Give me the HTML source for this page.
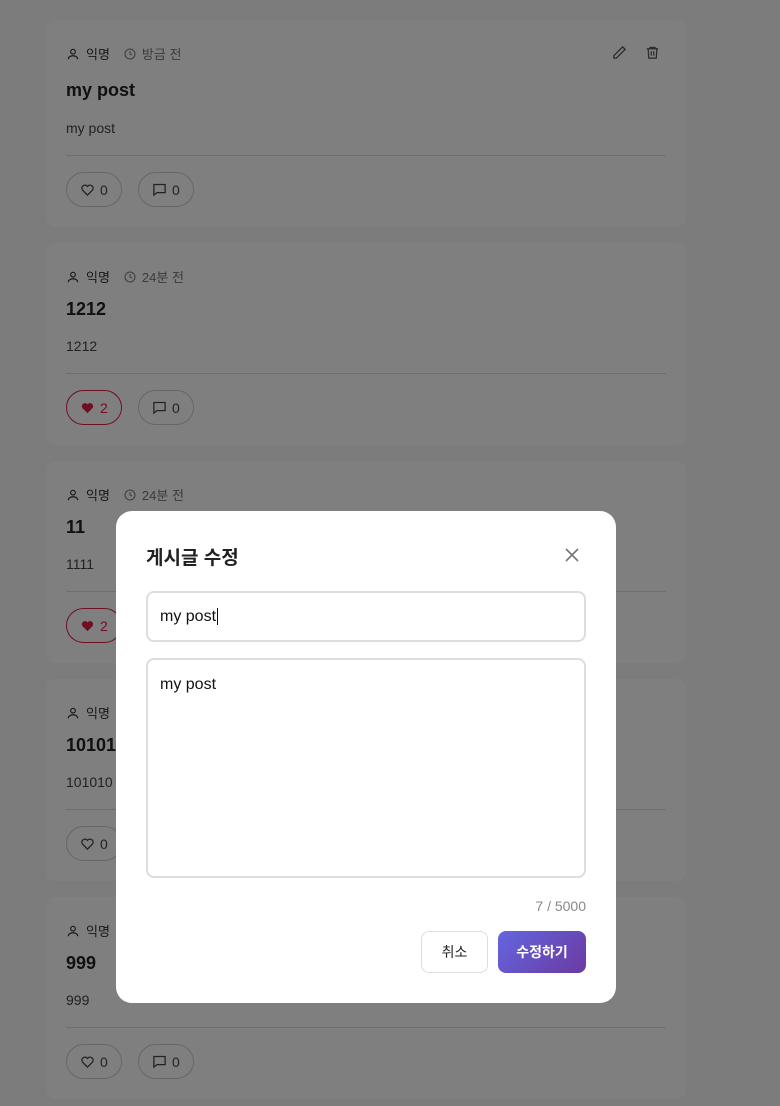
<!DOCTYPE html>
<html><head><meta charset="utf-8"><style>
*{box-sizing:border-box;margin:0;padding:0}
body{width:780px;height:1106px;overflow:hidden;background:#f8f8f8;font-family:"Liberation Sans","Noto Sans CJK KR",sans-serif;position:relative}
.card{position:absolute;left:46px;width:640px;height:202px;background:#fff;border-radius:10px;padding:0 20px}
.meta{position:absolute;top:24px;left:20px;display:flex;align-items:center;font-size:13px;color:#333}
.meta .t{color:#777;margin-left:14px;display:flex;align-items:center}
.meta svg{margin-right:6px}
.title{position:absolute;top:60px;left:20px;font-size:18px;font-weight:bold;color:#222}
.body{position:absolute;top:100px;left:20px;font-size:14px;color:#444}
.hr{position:absolute;top:135px;left:20px;right:20px;border-top:1px solid #ddd}
.btn{position:absolute;top:152px;height:35px;border:1px solid #ccc;border-radius:18px;display:flex;align-items:center;padding:0 13px;font-size:14px;color:#444}
.btn svg{margin-right:5px}
.liked{border-color:#e11d48;color:#e11d48}
.ov{position:absolute;inset:0;background:rgba(0,0,0,0.5)}
.modal{position:absolute;left:116px;top:511px;width:500px;height:492px;background:#fff;border-radius:16px}
.mt{position:absolute;left:30px;top:32px;font-size:19px;font-weight:bold;color:#222}
.in{position:absolute;left:30px;width:440px;border:2px solid #ddd;border-radius:8px;font-size:16px;color:#111;padding:0 12px}
.cnt{position:absolute;right:30px;top:387px;font-size:14px;color:#888}
.b{position:absolute;top:420px;height:42px;border-radius:8px;font-size:14px;display:flex;align-items:center;justify-content:center}
</style></head><body>

<div class="card" style="top:20px;height:207px">
 <div class="meta"><svg width="14" height="14" viewBox="0 0 24 24" fill="none" stroke="#333" stroke-width="2"><circle cx="12" cy="8" r="4"/><path d="M4 21c0-4 4-6 8-6s8 2 8 6"/></svg>익명<span class="t"><svg width="12" height="12" viewBox="0 0 24 24" fill="none" stroke="#777" stroke-width="2"><circle cx="12" cy="12" r="10"/><path d="M12 6v6l4 2"/></svg>방금 전</span></div>
 <svg style="position:absolute;left:566px;top:25px" width="15" height="15" viewBox="0 0 24 24" fill="none" stroke="#555" stroke-width="2"><path d="M17 3l4 4L7 21H3v-4z"/></svg>
 <svg style="position:absolute;left:599px;top:25px" width="15" height="15" viewBox="0 0 24 24" fill="none" stroke="#555" stroke-width="2"><path d="M3 6h18M8 6V4h8v2M5 6l1 15h12l1-15M10 10v7M14 10v7"/></svg>
 <div class="title">my post</div><div class="body">my post</div><div class="hr"></div>
 <div class="btn" style="left:20px"><svg width="15" height="15" viewBox="0 0 24 24" fill="none" stroke="#444" stroke-width="2"><path d="M12 21l-8-8a5 5 0 0 1 8-6 5 5 0 0 1 8 6z"/></svg>0</div>
 <div class="btn" style="left:92px"><svg width="15" height="15" viewBox="0 0 24 24" fill="none" stroke="#444" stroke-width="2"><path d="M3 4h18v13H8l-5 4z"/></svg>0</div>
</div>

<div class="card" style="top:243px">
 <div class="meta"><svg width="14" height="14" viewBox="0 0 24 24" fill="none" stroke="#333" stroke-width="2"><circle cx="12" cy="8" r="4"/><path d="M4 21c0-4 4-6 8-6s8 2 8 6"/></svg>익명<span class="t"><svg width="12" height="12" viewBox="0 0 24 24" fill="none" stroke="#777" stroke-width="2"><circle cx="12" cy="12" r="10"/><path d="M12 6v6l4 2"/></svg>24분 전</span></div>
 <div class="title" style="top:56px">1212</div><div class="body" style="top:95px">1212</div><div class="hr" style="top:130px"></div>
 <div class="btn liked" style="left:20px;top:147px"><svg width="15" height="15" viewBox="0 0 24 24" fill="#e11d48"><path d="M12 21l-8-8a5 5 0 0 1 8-6 5 5 0 0 1 8 6z"/></svg>2</div>
 <div class="btn" style="left:92px;top:147px"><svg width="15" height="15" viewBox="0 0 24 24" fill="none" stroke="#444" stroke-width="2"><path d="M3 4h18v13H8l-5 4z"/></svg>0</div>
</div>

<div class="card" style="top:461px">
 <div class="meta"><svg width="14" height="14" viewBox="0 0 24 24" fill="none" stroke="#333" stroke-width="2"><circle cx="12" cy="8" r="4"/><path d="M4 21c0-4 4-6 8-6s8 2 8 6"/></svg>익명<span class="t"><svg width="12" height="12" viewBox="0 0 24 24" fill="none" stroke="#777" stroke-width="2"><circle cx="12" cy="12" r="10"/><path d="M12 6v6l4 2"/></svg>24분 전</span></div>
 <div class="title" style="top:56px">11</div><div class="body" style="top:95px">1111</div><div class="hr" style="top:130px"></div>
 <div class="btn liked" style="left:20px;top:147px"><svg width="15" height="15" viewBox="0 0 24 24" fill="#e11d48"><path d="M12 21l-8-8a5 5 0 0 1 8-6 5 5 0 0 1 8 6z"/></svg>2</div>
</div>

<div class="card" style="top:679px">
 <div class="meta"><svg width="14" height="14" viewBox="0 0 24 24" fill="none" stroke="#333" stroke-width="2"><circle cx="12" cy="8" r="4"/><path d="M4 21c0-4 4-6 8-6s8 2 8 6"/></svg>익명</div>
 <div class="title" style="top:56px">101010</div><div class="body" style="top:95px">101010</div><div class="hr" style="top:130px"></div>
 <div class="btn" style="left:20px;top:147px"><svg width="15" height="15" viewBox="0 0 24 24" fill="none" stroke="#444" stroke-width="2"><path d="M12 21l-8-8a5 5 0 0 1 8-6 5 5 0 0 1 8 6z"/></svg>0</div>
</div>

<div class="card" style="top:897px">
 <div class="meta"><svg width="14" height="14" viewBox="0 0 24 24" fill="none" stroke="#333" stroke-width="2"><circle cx="12" cy="8" r="4"/><path d="M4 21c0-4 4-6 8-6s8 2 8 6"/></svg>익명</div>
 <div class="title" style="top:56px">999</div><div class="body" style="top:95px">999</div><div class="hr" style="top:130px"></div>
 <div class="btn" style="left:20px;top:147px"><svg width="15" height="15" viewBox="0 0 24 24" fill="none" stroke="#444" stroke-width="2"><path d="M12 21l-8-8a5 5 0 0 1 8-6 5 5 0 0 1 8 6z"/></svg>0</div>
 <div class="btn" style="left:92px;top:147px"><svg width="15" height="15" viewBox="0 0 24 24" fill="none" stroke="#444" stroke-width="2"><path d="M3 4h18v13H8l-5 4z"/></svg>0</div>
</div>

<div class="ov"></div>
<div class="modal">
 <div class="mt">게시글 수정</div>
 <svg style="position:absolute;left:449px;top:37px" width="14" height="14" viewBox="0 0 14 14" stroke="#777" stroke-width="1.6"><path d="M1 1l12 12M13 1L1 13"/></svg>
 <div class="in" style="top:80px;height:51px;line-height:47px">my post<span style="border-left:1px solid #111;margin-left:1px"></span></div>
 <div class="in" style="top:147px;height:220px;padding-top:16px">my post</div>
 <div class="cnt">7 / 5000</div>
 <div class="b" style="left:305px;width:67px;border:1px solid #ddd;color:#222">취소</div>
 <div class="b" style="left:382px;width:88px;background:linear-gradient(135deg,#6366e0,#6b3aa0);color:#fff;font-weight:bold">수정하기</div>
</div>
</body></html>
